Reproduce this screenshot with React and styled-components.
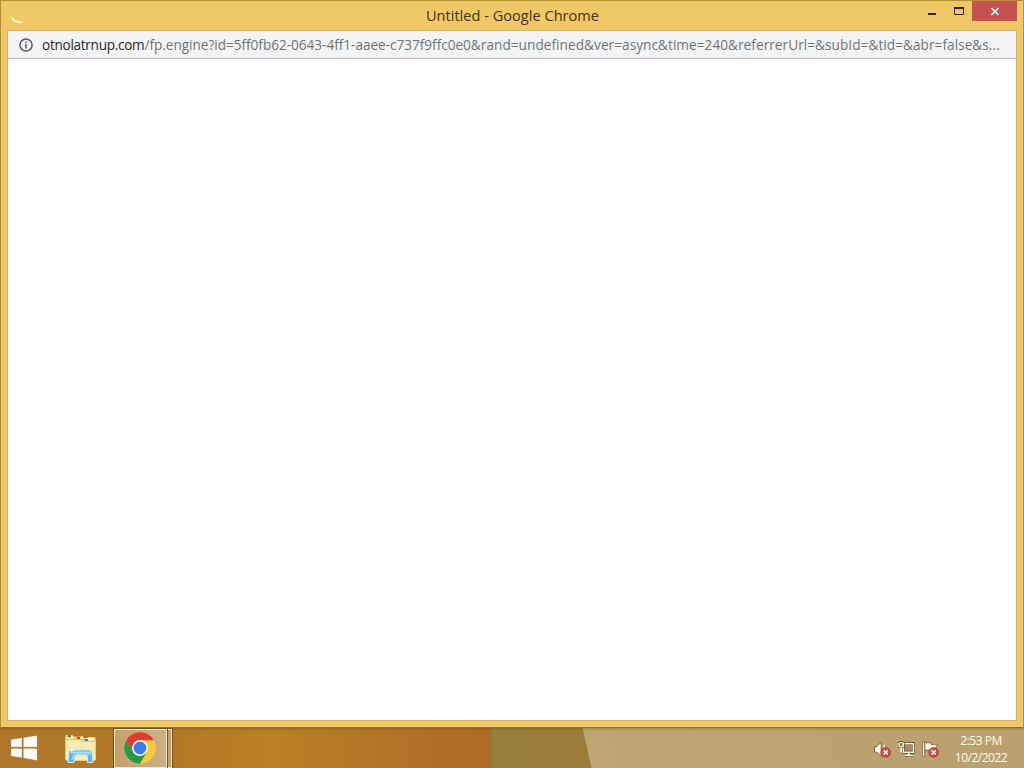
import React from "react";
import styled, { createGlobalStyle } from "styled-components";

const GlobalStyle = createGlobalStyle`
  * {
    box-sizing: border-box;
  }

  body {
    margin: 0;
    overflow: hidden;
    font-family: "Open Sans", "Noto Sans", sans-serif;
  }
`;

const Desktop = styled.div`
  display: flex;
  flex-direction: column;
  width: 1024px;
  height: 768px;
`;

const Window = styled.div`
  display: flex;
  flex-direction: column;
  height: 728px;
  padding: 0 7px 7px 7px;
  background: #efc868;
  border: 1px solid #b78f38;
  border-bottom-color: #93702a;
`;

const TitleBar = styled.div`
  display: grid;
  grid-template-columns: 104px 1fr 104px;
  height: 30px;
  margin-right: -1px;
`;

const Title = styled.div`
  padding-top: 4px;
  font-size: 14.6px;
  line-height: 20px;
  text-align: center;
  white-space: nowrap;
  color: #4a3208;
`;

const TabSpinner = styled.svg`
  width: 18px;
  height: 14px;
  margin: 10px 0 0 1px;
`;

const Controls = styled.div`
  display: flex;
  justify-content: flex-end;
`;

const ControlButton = styled.div`
  width: ${(props) => (props.$close ? 45 : 27)}px;
  height: 20px;
  background: ${(props) => (props.$close ? "#c75050" : "transparent")};

  svg {
    display: block;
    width: 100%;
    height: 100%;
  }
`;

const Page = styled.div`
  flex: 1;
  display: flex;
  flex-direction: column;
  background: #fff;
  outline: 1px solid #d5b467;
`;

const AddressBar = styled.div`
  display: flex;
  align-items: center;
  height: 28px;
  padding: 0 15px 0 11px;
  background: #f3f4f5;
  border-bottom: 1px solid #b5b6b8;

  svg {
    flex: none;
    width: 14px;
    height: 14px;
    margin-right: 9px;
  }
`;

const Url = styled.div`
  font-size: 13.6px;
  line-height: 20px;
  letter-spacing: ${(props) => props.$spacing}px;
  white-space: nowrap;
  color: ${(props) => (props.$host ? "#27292c" : "#717477")};
`;

const Taskbar = styled.div`
  display: flex;
  align-items: center;
  height: 40px;
  background:
    linear-gradient(rgba(80, 50, 0, 0.25), transparent 3px),
    linear-gradient(77.5deg, transparent 577px, #bea674 578px, #b9a06e 1008px),
    linear-gradient(90deg, #b1772a 0, #b37826 170px, #b98024 270px, #b27826 360px, #b16e27 430px, #ad6b26 489px, #95803c 493px, #9e7c39 550px, #9c7b38 600px);
`;

const StartButton = styled.div`
  width: 54px;
  padding-left: 10px;

  svg {
    display: block;
    width: 28px;
    height: 28px;
  }
`;

const TaskButton = styled.div`
  display: flex;
  align-items: center;
  width: 60px;
  padding: 2px 0 0 10px;

  svg {
    width: 34px;
    height: 32px;
  }
`;

const ActiveTask = styled.div`
  display: flex;
  align-items: center;
  width: 53px;
  height: 39px;
  padding-left: 9px;
  margin-top: 1px;
  background: linear-gradient(90deg, #c5a06c, #cdb087);
  border: 1px solid #f6e7c4;
  outline: 1px solid #72501d;
  outline-offset: 0;

  svg {
    width: 32px;
    height: 32px;
    margin-top: -1px;
  }
`;

const StackEdge = styled.div`
  width: 4px;
  height: 39px;
  margin: 1px 0 0 1px;
  background: #c7a16a;
  border: 1px solid #f6e7c4;
  border-left: 0;
  outline: 1px solid #78551f;
`;

const Tray = styled.div`
  display: flex;
  align-items: center;
  gap: 8px;
  margin: 2px 8px 0 auto;

  svg {
    width: 17px;
    height: 17px;
    margin-right: -1px;
  }
`;

const Clock = styled.div`
  width: 70px;
  font-size: 12px;
  line-height: 17px;
  letter-spacing: -0.5px;
  text-align: center;
  color: #fffbef;
`;

const InfoIcon = () => (
  <svg viewBox="0 0 14 14">
    <circle cx="7" cy="7" r="6.1" fill="none" stroke="#56595d" strokeWidth="1.5" />
    <path d="M7 6.2V10.4M7 3.6V5" stroke="#56595d" strokeWidth="1.6" />
  </svg>
);

const WindowsLogo = () => (
  <svg viewBox="0 0 28 28" fill="#fffdf5" stroke="#79501b" strokeWidth=".4">
    <path d="M.8 5.3L12.2 3.7V13.2H.8ZM13.2 3.5L27.3 1.3V13.2H13.2ZM.8 14.2H12.2V24L.8 22.3ZM13.2 14.2H27.3V26.7L13.2 24.2Z" />
  </svg>
);

const FolderIcon = () => (
  <svg viewBox="0 0 34 32">
    <path d="M1 4L2 2H8L9 3.5H13L14 3H19L20 5H23L24 4H31L32 6V27L30 28H3L1 26Z" fill="#e8cd72" />
    <path d="M2 4H10V7H31V27H2Z" fill="#f5e69d" />
    <path d="M2 7H17L19 9H31V27H2Z" fill="#f8ecb0" />
    <path d="M2 6.5H17L19 8.5H31" fill="none" stroke="#d8bd66" strokeWidth=".8" />
    <path d="M4 2.5H9V4H4ZM13 4H19V5.5H13ZM22 5H30V7H22Z" fill="#fffbe0" />
    <path d="M4 2H7V4.2H4Z" fill="#36a13c" />
    <path d="M13 3.6H16.2V6H13Z" fill="#d34828" />
    <path d="M20.5 6H24V8H20.5Z" fill="#2794ae" />
    <path d="M5 18.5Q5 17 7 17H26Q28 17 28 19L29 29.5H23.5V23.5Q23.5 22 22 22H13Q11 22 11 23.5L10 29.5H4Z" fill="#5db4e2" stroke="#c6edf8" />
    <path d="M8 19.3H26V21H10L8 27" fill="none" stroke="#a2def4" strokeWidth="1.4" />
    <path d="M7.5 14.5V20M4.8 17.3H10.2" stroke="#effcff" strokeWidth="1" />
  </svg>
);

const ChromeIcon = () => (
  <svg viewBox="0 0 32 32">
    <circle cx="16" cy="16" r="15.7" fill="#fdcb37" />
    <path d="M16 16L9.2 20 2.4 8.15A15.7 15.7 0 0 1 29.6 8.15H16Z" fill="#df3b2f" />
    <path d="M2.4 8.15L9.2 20A7.8 7.8 0 0 0 16 23.8L22.8 19.9 16 31.7A15.7 15.7 0 0 1 2.4 8.15Z" fill="#26984a" />
    <circle cx="16" cy="16" r="7.9" fill="#fff" />
    <circle cx="16" cy="16" r="6.4" fill="#397eea" />
  </svg>
);

const ErrorBadge = () => (
  <g>
    <circle cx="11" cy="10.8" r="4.6" fill="#cf4740" stroke="#963329" strokeWidth=".5" />
    <path d="M9.1 8.9L12.9 12.7M12.9 8.9L9.1 12.7" stroke="#fff" strokeWidth="1.6" />
  </g>
);

const SpeakerIcon = () => (
  <svg viewBox="0 0 16 16">
    <path d="M.5 5.3H2.5L6.8 1V14.5L2.5 10.5H.5Z" fill="#fffaf0" stroke="#6a4c2b" strokeWidth=".8" />
    <path d="M8.8 4Q10 5 10 6.5" fill="none" stroke="#fff8e5" />
    <ErrorBadge />
  </svg>
);

const NetworkIcon = () => (
  <svg viewBox="0 0 16 16">
    <path d="M5 2.5H14.5V10.5H5ZM6 13.3H14" fill="#a68f66" stroke="#5b432a" strokeWidth="2.6" />
    <path d="M5 2.5H14.5V10.5H5ZM10 10.5V13.3M6 13.3H14M2.8 5V10.5" fill="none" stroke="#fff9e7" strokeWidth="1.4" />
    <rect x="1" y="1.5" width="4" height="4" rx="1" fill="#8f7956" stroke="#5b432a" strokeWidth="2.4" />
    <rect x="1" y="1.5" width="4" height="4" rx="1" fill="#8f7956" stroke="#fff9e7" strokeWidth="1.3" />
  </svg>
);

const FlagIcon = () => (
  <svg viewBox="0 0 16 16">
    <path d="M.6 .8H2.5V14.5H.6Z" fill="#fffaf0" stroke="#6a4c2b" strokeWidth=".6" />
    <path d="M2.7 1.8H8.5V3.5H14.5L12.8 6.5 14.5 9.5H7V8.5H2.7Z" fill="#fffaf0" stroke="#6a4c2b" strokeWidth=".6" />
    <ErrorBadge />
  </svg>
);

const App = () => {
  return (
    <Desktop>
      <GlobalStyle />
      <Window>
        <TitleBar>
          <TabSpinner viewBox="0 0 18 14">
            <path d="M2.2 6.2Q5.5 13 13.5 11.2Q7 11.2 2.2 6.2Z" fill="#fffbed" stroke="#fff3cc" strokeWidth="1.2" />
          </TabSpinner>
          <Title>Untitled - Google Chrome</Title>
          <Controls>
            <ControlButton>
              <svg viewBox="0 0 27 20">
                <path d="M10 13H18" stroke="#3a250a" strokeWidth="2" />
              </svg>
            </ControlButton>
            <ControlButton>
              <svg viewBox="0 0 27 20">
                <path d="M9.5 7V13.5H18.5V7" fill="none" stroke="#3a250a" />
                <path d="M9 7H19" stroke="#3a250a" strokeWidth="2" />
              </svg>
            </ControlButton>
            <ControlButton $close>
              <svg viewBox="0 0 45 20">
                <path d="M19.5 7L26.5 14M26.5 7L19.5 14" stroke="#fff" strokeWidth="1.7" />
              </svg>
            </ControlButton>
          </Controls>
        </TitleBar>
        <Page>
          <AddressBar>
            <InfoIcon />
            <Url $host $spacing={-0.29}>otnolatrnup.com</Url>
            <Url $spacing={-0.02}>/fp.engine?id=5ff0fb62-0643-4ff1-aaee-c737f9ffc0e0</Url>
            <Url $spacing={0.06}>
              &amp;rand=undefined&amp;ver=async&amp;time=240&amp;referrerUrl=&amp;subId=&amp;tid=&amp;abr=false&amp;s...
            </Url>
          </AddressBar>
        </Page>
      </Window>
      <Taskbar>
        <StartButton>
          <WindowsLogo />
        </StartButton>
        <TaskButton>
          <FolderIcon />
        </TaskButton>
        <ActiveTask>
          <ChromeIcon />
        </ActiveTask>
        <StackEdge />
        <Tray>
          <SpeakerIcon />
          <NetworkIcon />
          <FlagIcon />
          <Clock>
            <div>2:53 PM</div>
            <div>10/2/2022</div>
          </Clock>
        </Tray>
      </Taskbar>
    </Desktop>
  );
};

export default App;
